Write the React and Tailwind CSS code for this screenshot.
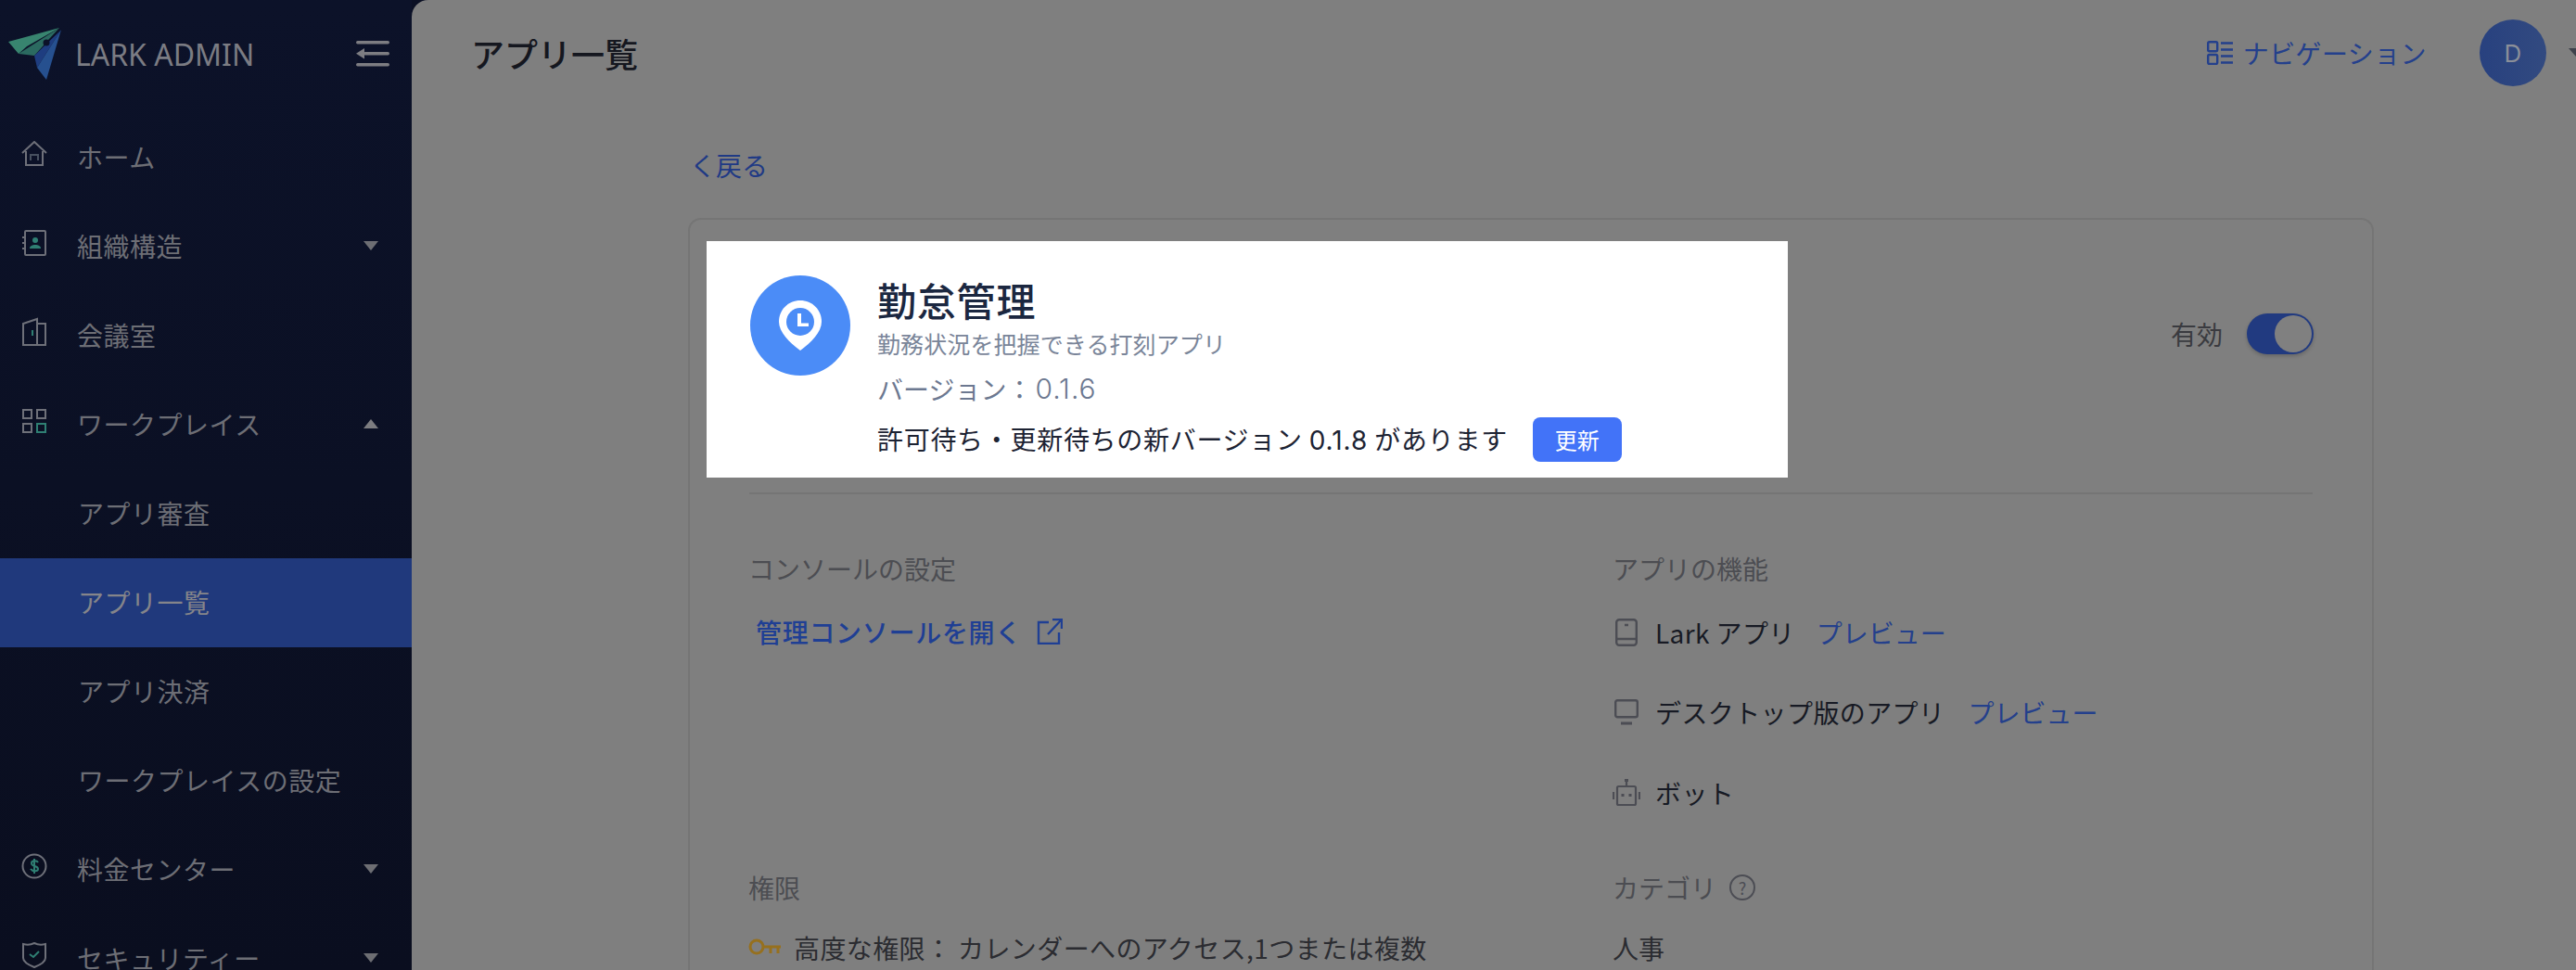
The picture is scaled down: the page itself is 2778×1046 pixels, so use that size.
const HomeIcon = () => (
  <svg width="28" height="28" viewBox="0 0 28 28" fill="none" stroke="#6e7079" strokeWidth="2">
    <path d="M1 13 14 1l13 12" />
    <path d="M5 11v15h18V11" />
    <path d="M10 21v-6h8v6" stroke="#47505f" />
  </svg>
);

const ContactIcon = () => (
  <svg width="28" height="28" viewBox="0 0 28 28" fill="none" stroke="#6e7079" strokeWidth="2">
    <rect x="4" y="1" width="22" height="26" rx="1" />
    <path d="M1 8h4M1 14h4M1 20h4" />
    <circle cx="15" cy="11" r="3" fill="#2f7f73" stroke="none" />
    <path d="M9 20c0-3 3-4 6-4s6 1 6 4z" fill="#2f7f73" stroke="none" />
  </svg>
);

const RoomIcon = () => (
  <svg width="28" height="32" viewBox="0 0 28 32" fill="none" stroke="#6e7079" strokeWidth="2">
    <path d="M2 7 17 2v28H2zM17 7h9v23h-9" />
    <path d="M12 14v6" stroke="#2f7f73" />
  </svg>
);

const GridIcon = () => (
  <svg width="26" height="26" viewBox="0 0 26 26" fill="none" stroke="#6e7079" strokeWidth="2">
    <rect x="1" y="1" width="9" height="9" />
    <rect x="16" y="1" width="9" height="9" />
    <rect x="1" y="16" width="9" height="9" />
    <rect x="16" y="16" width="9" height="9" stroke="#2f7f73" />
  </svg>
);

const DollarIcon = () => (
  <svg width="28" height="28" viewBox="0 0 28 28" fill="none" strokeWidth="2">
    <circle cx="14" cy="14" r="12.5" stroke="#6e7079" />
    <path d="M18 10c-1-2-7-3-7 1 0 4 7 2 7 6 0 3-6 3-8 0M14 6v16" stroke="#2f7f73" />
  </svg>
);

const ShieldIcon = () => (
  <svg width="28" height="30" viewBox="0 0 28 30" fill="none" strokeWidth="2">
    <path d="M2 3c4 1 8 1 12-1 4 2 8 2 12 1v15c0 5-7 8-12 10C9 26 2 23 2 18z" stroke="#6e7079" />
    <path d="m9 14 4 3 6-6" stroke="#2f7f73" />
  </svg>
);

const menu = [
  { label: "ホーム", icon: <HomeIcon /> },
  { label: "組織構造", icon: <ContactIcon />, caret: "down" },
  { label: "会議室", icon: <RoomIcon /> },
  { label: "ワークプレイス", icon: <GridIcon />, caret: "up" },
  { label: "アプリ審査" },
  { label: "アプリ一覧", active: true },
  { label: "アプリ決済" },
  { label: "ワークプレイスの設定" },
  { label: "料金センター", icon: <DollarIcon />, caret: "down" },
  { label: "セキュリティー", icon: <ShieldIcon />, caret: "down" },
];

const Sidebar = () => (
  <div className="w-[444px] shrink-0 h-full bg-gradient-to-b from-[#0c1229] to-[#0a0e1f] overflow-hidden">
    <div className="h-[122px] flex items-start pl-[9px] pr-[24px] pt-[29px]">
      <svg width="58" height="58" viewBox="0 0 58 58" className="shrink-0">
        <path d="M0 16 55 1 20 21 11 29z" fill="#38846f" />
        <path d="M11 29 55 1 28 31z" fill="#2b6a60" />
        <path d="M57 3 28 31 31 44z" fill="#1e3d80" />
        <path d="M57 3 31 44 41 57z" fill="#26508f" />
        <path d="M41 17 57 2" stroke="#0c1229" strokeWidth="1.5" />
        <circle cx="41" cy="17" r="3.5" fill="#0c1229" />
      </svg>
      <span className="ml-[14px] mt-[5px] text-[32px] leading-[50px] text-[#7b7c83] font-['Noto_Sans',sans-serif]">
        LARK ADMIN
      </span>
      <svg width="36" height="28" viewBox="0 0 36 28" fill="#7d7d82" className="ml-auto mt-[15px]">
        <rect width="36" height="3.5" rx="1.7" />
        <rect x="8" y="12" width="28" height="3.5" rx="1.7" />
        <rect y="24" width="36" height="3.5" rx="1.7" />
        <path d="M0 13.7 9 8v11.5z" />
      </svg>
    </div>
    {menu.map((item) => (
      <div
        key={item.label}
        className={`h-[96px] flex items-center pl-[22px] pr-[36px] pb-[2px] text-[28px] tracking-[0.5px] text-[#6d6e75] ${
          item.active ? "bg-[#20397c] text-[#85858a]" : ""
        }`}
      >
        <div className="w-[30px] flex justify-center -translate-y-[3px]">{item.icon}</div>
        <span className={item.icon ? "ml-[31px]" : "ml-[32px]"}>{item.label}</span>
        {item.caret && (
          <div
            className={`ml-auto w-0 h-0 border-l-[8px] border-r-[8px] border-l-transparent border-r-transparent ${
              item.caret === "down"
                ? "border-t-[10px] border-t-[#6d6e73]"
                : "border-b-[10px] border-b-[#7c7c80]"
            }`}
          />
        )}
      </div>
    ))}
  </div>
);

const Header = () => (
  <div className="h-[124px] shrink-0 flex items-center pb-[10px] pl-[64px]">
    <h1 className="text-[36px] leading-[48px] font-medium text-[#15171f]">アプリ一覧</h1>
    <div className="ml-auto flex items-center">
      <svg width="28" height="26" viewBox="0 0 28 26" fill="none" stroke="#24408c" strokeWidth="2.4">
        <rect x="1.2" y="1.2" width="10" height="10" rx="1.5" />
        <rect x="1.2" y="15" width="10" height="10" rx="1.5" />
        <path d="M15 2.5h13M15 9.5h13M15 16.5h13M15 23.5h13" />
      </svg>
      <span className="ml-[11px] text-[28px] tracking-[0.4px] text-[#24408c]">ナビゲーション</span>
      <div className="ml-[57px] w-[72px] h-[72px] rounded-full bg-gradient-to-r from-[#28417f] to-[#324a80] flex items-center justify-center text-[26px] text-[#8b8f99] font-['Inter',sans-serif]">
        D
      </div>
      <div className="ml-[24px] -mr-[10px] w-0 h-0 border-l-[9px] border-r-[9px] border-t-[10px] border-l-transparent border-r-transparent border-t-[#3f424c]" />
    </div>
  </div>
);

const AppPin = () => (
  <div className="w-[108px] h-[108px] shrink-0 rounded-full bg-[#4b8cf7] flex items-center justify-center">
    <svg width="46" height="54" viewBox="0 0 46 54">
      <path d="M23 0C10 0 0 10 0 23c0 11 11 22 23 31 12-9 23-20 23-31C46 10 36 0 23 0z" fill="#fff" />
      <circle cx="23" cy="23" r="15" fill="#4b8cf7" />
      <path d="M20 14h4v10.5h8v3.5H20z" fill="#fff" />
    </svg>
  </div>
);

const Spotlight = () => (
  <div className="w-[1166px] h-[255px] shrink-0 bg-white flex pl-[47px] pt-[37px]">
    <AppPin />
    <div className="ml-[29px] mt-[1px]">
      <div className="text-[42px] leading-[50px] font-medium text-[#1b2740] tracking-[0.8px]">勤怠管理</div>
      <div className="mt-[2px] text-[25px] leading-[40px] tracking-[0.1px] text-[#7a8599]">勤務状況を把握できる打刻アプリ</div>
      <div className="mt-[9px] flex text-[28px] leading-[40px] text-[#6c7890]">
        <span>バージョン：</span>
        <span className="ml-[3px] font-['Inter',sans-serif] font-light text-[30px] tracking-[1px]">0.1.6</span>
      </div>
      <div className="mt-[11px] h-[48px] flex items-center text-[28px] tracking-[0.7px] text-[#1d2333]">
        <span>
          許可待ち・更新待ちの新バージョン <span className="font-['Inter',sans-serif] tracking-[1px]">0.1.8</span> があります
        </span>
        <button className="ml-[27px] w-[96px] h-[48px] rounded-[8px] bg-[#4273f8] text-white text-[24px] tracking-normal">更新</button>
      </div>
    </div>
  </div>
);

const SectionTitle = ({ children }) => (
  <div className="text-[28px] leading-[40px] text-[#4c4d52]">{children}</div>
);

const PhoneIcon = () => (
  <svg width="24" height="30" viewBox="0 0 24 30" fill="none" stroke="#4c4d54" strokeWidth="2.4">
    <rect x="1.2" y="1.2" width="21.6" height="27.6" rx="3" />
    <path d="M1 22h22M10 7h4" />
  </svg>
);

const DesktopIcon = () => (
  <svg width="26" height="28" viewBox="0 0 26 28" fill="none" stroke="#4c4d54" strokeWidth="2.4">
    <rect x="1.2" y="1.2" width="23.6" height="18" rx="2" />
    <path d="M7 26h12" strokeWidth="3" />
  </svg>
);

const BotIcon = () => (
  <svg width="30" height="30" viewBox="0 0 30 30" fill="none" stroke="#4c4d54" strokeWidth="2.2">
    <rect x="5" y="8" width="20" height="20" rx="1.5" />
    <path d="M15 1v7M1 14v8M29 14v8" />
    <rect x="13" y="0" width="4" height="3" fill="#4c4d54" stroke="none" />
    <path d="M11 16v3M19 16v3" strokeWidth="3" />
  </svg>
);

const Feature = ({ icon, label, preview, className }) => (
  <div className={`flex items-center h-[40px] ${className}`}>
    <div className="w-[30px] flex justify-center">{icon}</div>
    <span className="ml-[16px] tracking-[0.4px] text-[#171a24]">{label}</span>
    {preview && <span className={preview}>プレビュー</span>}
  </div>
);

const DetailGrid = () => (
  <div className="grid grid-cols-[932px_1fr] pl-[63px] text-[28px] mt-[60px]">
    <div>
      <SectionTitle>コンソールの設定</SectionTitle>
      <div className="mt-[28px] ml-[8px] flex items-center text-[#1f3f94] h-[40px] font-medium tracking-[0.7px]">
        管理コンソールを開く
        <svg width="28" height="28" viewBox="0 0 28 28" fill="none" stroke="#1f3f94" strokeWidth="2.4" className="ml-[16px]">
          <path d="M13 4H2v23h22V15M12 17 26 2M17 1h10v10" />
        </svg>
      </div>
      <div className="mt-[236px]">
        <SectionTitle>権限</SectionTitle>
      </div>
      <div className="mt-[25px] flex items-center h-[40px] text-[#2b2c31]">
        <svg width="36" height="20" viewBox="0 0 36 20" fill="none" stroke="#96701e" strokeWidth="3" className="shrink-0">
          <circle cx="9" cy="9" r="7" />
          <path d="M16 9h19M24 9v7M32 9v7" />
        </svg>
        <span className="ml-[13px] tracking-[0.4px]">高度な権限： カレンダーへのアクセス,1つまたは複数</span>
      </div>
    </div>
    <div>
      <SectionTitle>アプリの機能</SectionTitle>
      <Feature icon={<PhoneIcon />} label="Lark アプリ" preview="ml-[23px] text-[#24408c]" className="mt-[29px]" />
      <Feature icon={<DesktopIcon />} label="デスクトップ版のアプリ" preview="ml-[25px] text-[#24408c]" className="mt-[46px]" />
      <Feature icon={<BotIcon />} label="ボット" className="mt-[47px]" />
      <div className="mt-[62px] flex items-center">
        <SectionTitle>カテゴリ</SectionTitle>
        <div className="ml-[14px] w-[28px] h-[28px] rounded-full border-2 border-[#4c4d54] flex items-center justify-center text-[18px] text-[#4c4d54]">
          ?
        </div>
      </div>
      <div className="mt-[25px] h-[40px] leading-[40px] text-[#2b2c31]">人事</div>
    </div>
  </div>
);

export default function App() {
  return (
    <div className="h-screen flex overflow-hidden bg-[#0b1024] font-['Noto_Sans_CJK_JP','Noto_Sans',sans-serif]">
      <Sidebar />
      <div className="flex-1 min-w-0 rounded-tl-[18px] bg-[#7f7f7f] flex flex-col overflow-hidden">
        <Header />
        <div className="pl-[298px] pr-[218px]">
          <div className="mt-[34px] pl-[2px] text-[28px] leading-[40px] text-[#1f3a85]">く戻る</div>
          <div className="mt-[37px] border-2 border-b-0 border-[#757575] rounded-t-[14px] pl-[18px] pt-[23px] h-[900px]">
            <div className="flex items-start">
              <Spotlight />
              <div className="ml-auto mr-[63px] mt-[78px] flex items-center">
                <span className="text-[28px] text-[#3a3b40]">有効</span>
                <div className="ml-[26px] w-[72px] h-[44px] rounded-full bg-[#213a80] flex items-center justify-end pr-[2px] shadow-[0_2px_4px_rgba(0,0,0,0.2)]">
                  <div className="w-[40px] h-[40px] rounded-full bg-[#808080]" />
                </div>
              </div>
            </div>
            <div className="mt-[16px] ml-[46px] mr-[64px] h-[2px] bg-[#757575]" />
            <div className="-ml-[18px]">
              <DetailGrid />
            </div>
          </div>
        </div>
      </div>
    </div>
  );
}
